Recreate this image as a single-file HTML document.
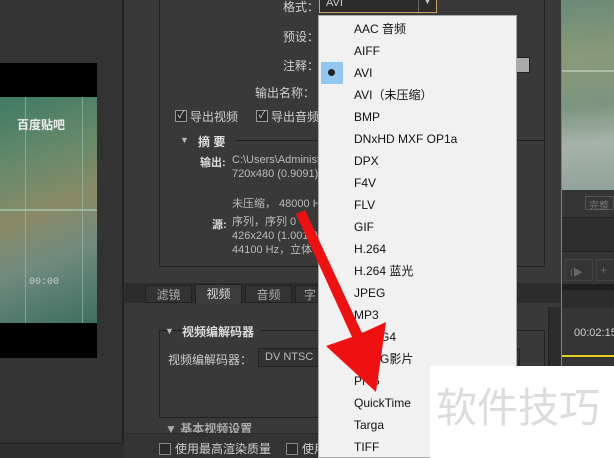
<!DOCTYPE html>
<html><head><meta charset="utf-8"><style>
*{margin:0;padding:0;box-sizing:border-box}
html,body{width:614px;height:458px;overflow:hidden}
body{background:#333;position:relative;font-family:"Liberation Sans","Noto Sans CJK SC",sans-serif;font-size:12px;color:#ccc}
.a{position:absolute}
.lbl{position:absolute;color:#cfcfcf;font-size:12px;text-align:right;white-space:nowrap}
.cb{position:absolute;width:12px;height:12px;border:1px solid #999;background:#2a2a2a;color:#ddd;font-size:10px;line-height:10px;text-align:center}
.menu{position:absolute;left:318px;top:15px;width:199px;height:443px;background:#f1f1f1;border:1px solid #aaa}
.it{position:absolute;left:35px;color:#111;font-size:12px;line-height:16px;white-space:nowrap}
</style></head><body>
<div class="a" style="left:0;top:63px;width:97px;height:295px;background:#000"></div>
<div class="a" style="left:0;top:97px;width:97px;height:226px;background:linear-gradient(160deg,#3f7a66 0%,#6a8a6a 30%,#8a8a66 50%,#6f8a7f 70%,#3e6e5e 100%)"></div>
<div class="a" style="left:0;top:209px;width:97px;height:2px;background:#a9c9b8;opacity:.7"></div>
<div class="a" style="left:25px;top:97px;width:1px;height:226px;background:#9cc3b0;opacity:.6"></div>
<div class="a" style="left:82px;top:97px;width:1px;height:226px;background:#9cc3b0;opacity:.6"></div>
<div class="a" style="left:17px;top:116px;color:#eee;font-size:12px;font-weight:bold">百度贴吧</div>
<div class="a" style="left:29px;top:277px;color:#ccc;font-size:10px;font-family:'Liberation Mono',monospace">00:00</div>
<div class="a" style="left:122px;top:0;width:2px;height:445px;background:#222"></div>
<div class="a" style="left:0;top:443px;width:124px;height:15px;background:#2e2e2e;border-top:1px solid #222"></div>
<div class="a" style="left:125px;top:0;width:436px;height:458px;background:#393939"></div>
<div class="a" style="left:159px;top:0;width:386px;height:267px;border:1px solid #222;border-top:none"></div>
<div class="lbl" style="left:283px;top:-2px">格式：</div>
<div class="a" style="left:319px;top:-4px;width:118px;height:17px;border:1px solid #c8a060;background:#2c2c2c;color:#ccc;padding-left:6px;font-size:11px">AVI<span style="position:absolute;right:0;top:0;width:18px;height:15px;border-left:1px solid #666;text-align:center;font-size:8px">▼</span></div>
<div class="lbl" style="left:283px;top:28px">预设：</div>
<div class="lbl" style="left:283px;top:57px">注释：</div>
<div class="a" style="left:516px;top:57px;width:14px;height:16px;background:#aaa;border:1px solid #222"></div>
<div class="lbl" style="left:255px;top:84px">输出名称：</div>
<div class="cb" style="left:175px;top:110px">✓</div><div class="lbl" style="left:190px;top:108px">导出视频</div>
<div class="cb" style="left:256px;top:110px">✓</div><div class="lbl" style="left:271px;top:108px">导出音频</div>
<div class="a" style="left:180px;top:135px;font-size:9px;color:#bbb">▼</div>
<div class="a" style="left:198px;top:133px;font-weight:bold;color:#ddd">摘 要</div>
<div class="a" style="left:235px;top:140px;width:310px;height:1px;background:#222"></div>
<div class="a" style="left:200px;top:154px;font-weight:bold;color:#ddd;font-size:11px">输出:</div>
<div class="a" style="left:232px;top:153px;font-size:11px;color:#bbb;line-height:14px">C:\Users\Administ<br>720x480 (0.9091)</div>
<div class="a" style="left:232px;top:195px;font-size:11px;color:#bbb">未压缩， 48000 H</div>
<div class="a" style="left:212px;top:216px;font-weight:bold;color:#ddd;font-size:11px">源:</div>
<div class="a" style="left:232px;top:215px;font-size:11px;color:#bbb;line-height:14px">序列，序列 0<br>426x240 (1.0015)<br>44100 Hz，立体</div>
<div class="a" style="left:125px;top:283px;width:436px;height:20px;background:#2c2c2c"></div>
<div class="a" style="left:145px;top:285px;width:47px;height:18px;background:#333;border:1px solid #222;text-align:center;color:#aaa">滤镜</div>
<div class="a" style="left:195px;top:284px;width:47px;height:20px;background:#3c3c3c;border:1px solid #222;border-bottom:none;text-align:center;color:#ddd">视频</div>
<div class="a" style="left:245px;top:285px;width:47px;height:18px;background:#333;border:1px solid #222;text-align:center;color:#aaa">音频</div>
<div class="a" style="left:295px;top:285px;width:30px;height:18px;background:#333;border:1px solid #222;color:#aaa;padding-left:8px">字</div>
<div class="a" style="left:159px;top:330px;width:386px;height:88px;border:1px solid #222"></div>
<div class="a" style="left:165px;top:326px;font-size:9px;color:#bbb">▼</div>
<div class="a" style="left:182px;top:323px;font-weight:bold;color:#ddd;background:#393939;padding-right:6px">视频编解码器</div>
<div class="a" style="left:168px;top:351px;color:#ccc">视频编解码器：</div>
<div class="a" style="left:258px;top:348px;width:262px;height:19px;border:1px solid #222;background:#333;color:#bbb;padding-left:6px;font-size:11px;line-height:17px">DV NTSC</div>
<div class="a" style="left:165px;top:420px;font-weight:bold;color:#aaa">▼ 基本视频设置</div>
<div class="a" style="left:125px;top:433px;width:436px;height:25px;background:#333;border-top:1px solid #2a2a2a"></div>
<div class="cb" style="left:159px;top:443px;border-color:#888"></div><div class="lbl" style="left:175px;top:440px">使用最高渲染质量</div>
<div class="cb" style="left:286px;top:443px;border-color:#888"></div><div class="lbl" style="left:302px;top:440px">使用</div>
<div class="a" style="left:548px;top:307px;width:13px;height:151px;background:#2c2c2c;border-left:1px solid #222"></div>
<div class="a" style="left:561px;top:0;width:1px;height:366px;background:#5a8ac0"></div>
<div class="a" style="left:562px;top:0;width:52px;height:190px;background:linear-gradient(175deg,#6a8a78 0%,#8a9a78 30%,#7c9480 55%,#a6b2aa 75%,#90a29a 100%)"></div>
<div class="a" style="left:562px;top:70px;width:52px;height:2px;background:#c8d8cc;opacity:.6"></div>
<div class="a" style="left:562px;top:190px;width:52px;height:176px;background:#353535"></div>
<div class="a" style="left:585px;top:196px;width:29px;height:14px;border:1px solid #555;color:#777;font-size:10px;padding-left:3px">完整</div>
<div class="a" style="left:562px;top:217px;width:52px;height:35px;background:#2e2e2e;border-top:1px solid #222;border-bottom:1px solid #222"></div>
<div class="a" style="left:565px;top:259px;width:28px;height:22px;border:1px solid #444;color:#666;font-size:10px;padding:4px">I▶</div>
<div class="a" style="left:596px;top:259px;width:20px;height:22px;border:1px solid #444;color:#666;padding:3px">+</div>
<div class="a" style="left:562px;top:284px;width:52px;height:6px;background:#1e1e1e"></div>
<div class="a" style="left:562px;top:290px;width:52px;height:18px;background:#2c2c2c"></div>
<div class="a" style="left:574px;top:327px;color:#ccc;font-size:11px">00:02:15</div>
<div class="a" style="left:562px;top:355px;width:52px;height:2px;background:#e0d020"></div>
<div class="menu">
<div class="a" style="left:2px;top:46px;width:22px;height:22px;background:#90c8f0"></div>
<div class="a" style="left:9px;top:53px;width:7px;height:7px;border-radius:50%;background:#222"></div>
<div class="it" style="top:5px">AAC 音频</div>
<div class="it" style="top:27px">AIFF</div>
<div class="it" style="top:49px">AVI</div>
<div class="it" style="top:71px">AVI（未压缩）</div>
<div class="it" style="top:93px">BMP</div>
<div class="it" style="top:115px">DNxHD MXF OP1a</div>
<div class="it" style="top:137px">DPX</div>
<div class="it" style="top:159px">F4V</div>
<div class="it" style="top:181px">FLV</div>
<div class="it" style="top:203px">GIF</div>
<div class="it" style="top:225px">H.264</div>
<div class="it" style="top:247px">H.264 蓝光</div>
<div class="it" style="top:269px">JPEG</div>
<div class="it" style="top:291px">MP3</div>
<div class="it" style="top:313px">MPEG4</div>
<div class="it" style="top:335px">MPEG影片</div>
<div class="it" style="top:357px">PNG</div>
<div class="it" style="top:379px">QuickTime</div>
<div class="it" style="top:401px">Targa</div>
<div class="it" style="top:423px">TIFF</div>
</div>
<div class="a" style="left:430px;top:366px;width:184px;height:92px;background:#fff"></div>
<div class="a" style="left:436px;top:384px;font-size:41px;color:#dcdcdc;line-height:48px;white-space:nowrap">软件技巧</div>
<svg class="a" style="left:0;top:0" width="614" height="458"><polygon points="296,214 305,210 362,333 386,322 376,392 326,346 352,337" fill="#ee1111"/></svg>
</body></html>
